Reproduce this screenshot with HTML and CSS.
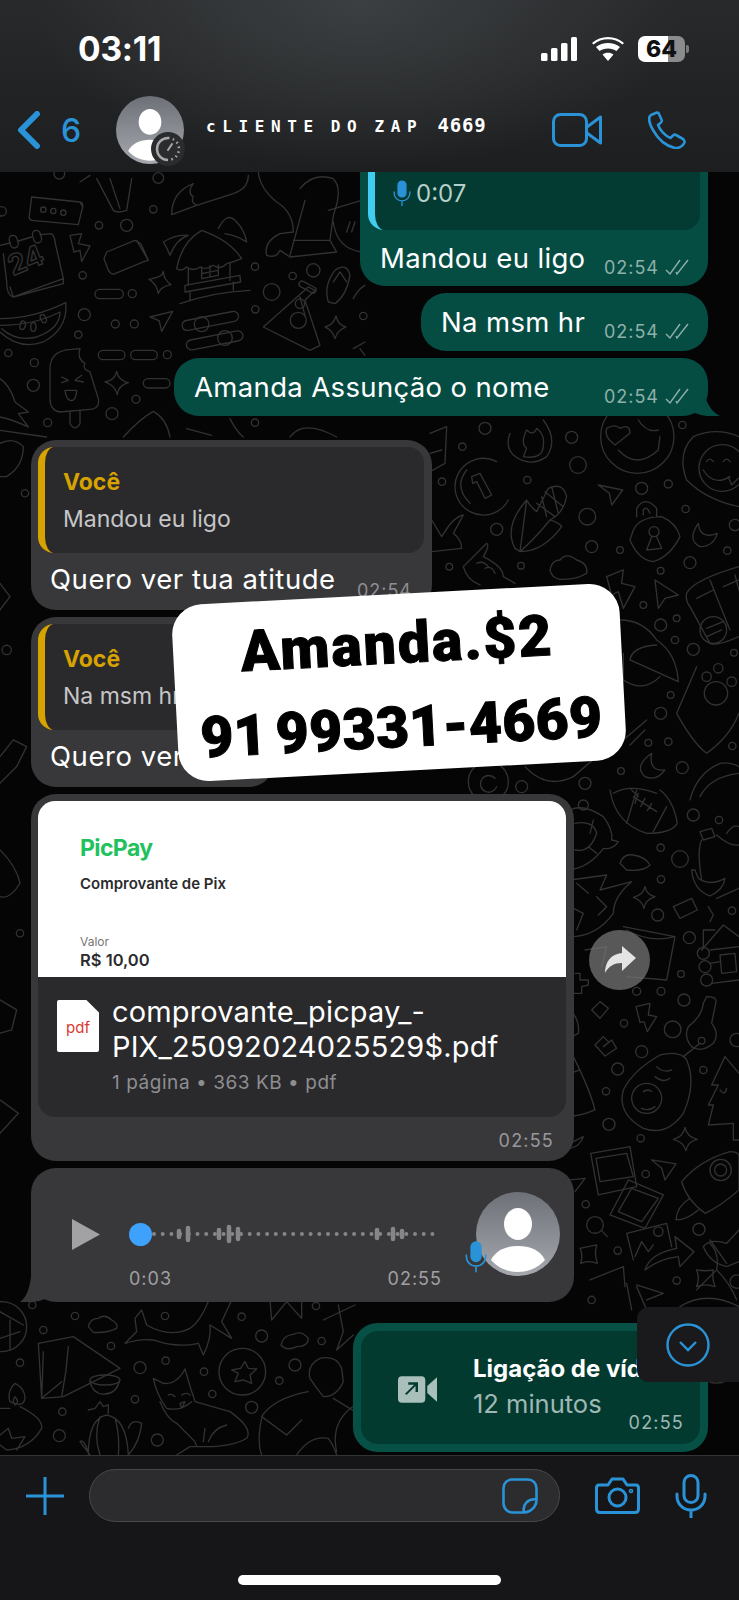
FILE: index.html
```html
<!DOCTYPE html>
<html lang="pt-BR">
<head>
<meta charset="utf-8">
<title>cLIENTE DO ZAP 4669</title>
<link rel="stylesheet" href="styles.css">
</head>
<body>
<svg class="defs" width="0" height="0">
  <defs>
    <linearGradient id="avatarFill" x1="0" y1="0" x2="0" y2="1">
      <stop offset="0" stop-color="#6d7077"/>
      <stop offset="1" stop-color="#a5a8ae"/>
    </linearGradient>
    <clipPath id="avatarClip"><circle cx="42" cy="42" r="42"/></clipPath>
    <symbol id="person" viewBox="0 0 84 84">
      <circle cx="42" cy="42" r="42" fill="url(#avatarFill)"/>
      <g clip-path="url(#avatarClip)" fill="#fff">
        <ellipse cx="42" cy="32" rx="14" ry="16"/>
        <path d="M15 68C20 58 30 54 42 54S64 58 69 68C62 76 52 80 42 80S22 76 15 68Z"/>
      </g>
    </symbol>
    <symbol id="mic" viewBox="0 0 32 44">
      <rect x="9" y="1" width="14" height="28" rx="7"/>
      <path d="M2 20V22C2 30 8 36 16 36S30 30 30 22V20M16 36V44" fill="none" stroke-linecap="round"/>
    </symbol>
  </defs>
</svg>

<main class="phone">
  <header class="topbar">
    <div class="status">
      <span class="clock">03:11</span>
      <div class="status-icons">
        <svg class="signal" viewBox="0 0 36 24"><rect x="0" y="16" width="6.5" height="8" rx="1.5"/><rect x="10" y="11" width="6.5" height="13" rx="1.5"/><rect x="20" y="6" width="6.5" height="18" rx="1.5"/><rect x="30" y="0" width="6" height="24" rx="1.5"/></svg>
        <svg class="wifi" viewBox="0 0 32 24"><path d="M16 24 10.500 17.500C13.500 15 18.500 15 21.500 17.500ZM7.500 14 4 10C10.500 4.500 21.500 4.500 28 10L24.500 14C20 10.500 12 10.500 7.500 14ZM1.500 7.500 0 6C8.500 -2 23.500 -2 32 6L30.500 7.500C22.500 0.500 9.500 0.500 1.500 7.500Z"/></svg>
        <div class="battery"><span>64</span></div>
        <i class="battery-tip"></i>
      </div>
    </div>
    <nav class="navrow">
      <svg class="back" viewBox="0 0 24 38"><path d="M20 3 4 19 20 35"/></svg>
      <span class="unread">6</span>
      <div class="avatar">
        <svg class="avatar-img"><use href="#person"/></svg>
        <svg class="ring" viewBox="0 0 34 34"><circle cx="17" cy="17" r="17" fill="#2b2c2e"/><path d="M17 6A11 11 0 0 0 17 28" fill="none" stroke="#a9a9ab" stroke-width="2.500"/><path d="M17 6A11 11 0 0 1 17 28" fill="none" stroke="#a9a9ab" stroke-width="2.500" stroke-dasharray="1.500 3.400"/><path d="M17 18 21 12" stroke="#a9a9ab" stroke-width="2" stroke-linecap="round"/></svg>
      </div>
      <h1 class="contact">cLIENTE DO ZAP <b>4669</b></h1>
      <svg class="nav-video" viewBox="0 0 50 34"><rect x="1.500" y="1.500" width="33" height="31" rx="7"/><path d="M35 14 48.500 4V30L35 20"/></svg>
      <svg class="nav-phone" viewBox="0 0 38 38"><path d="M9 1.500 3 4C0 6 1 12 5 19 10 28 18 35 27 37 31 37.500 35 35 36.500 31.500 37 30 36 29 35 28L28 24C27 23.500 26 23.500 25 24.500L22.500 27C17 25 12 19 10 14L13 11.500C14 10.500 14 9.500 13.500 8.500L10.500 2C10 1.500 9.500 1.500 9 1.500Z"/></svg>
    </nav>
  </header>

  <section class="chat">
    <svg class="wallpaper" viewBox="0 172 739 1283">
      <g class="doodles" transform="translate(0 172) scale(.3333)">
        <path d="M95 75 240 90Q250 92 248 105L235 158 95 145Q85 140 88 130ZM240 90 248 105"/>
        <path d="M240 30 270 10M290 20 340 115Q350 125 380 115L395 20M330 20 360 110"/>
        <path d="M515 128Q515 60 580 35 560 60 580 75 570 90 590 100L700 65Q745 50 745 10M515 128 590 100"/>
        <path d="M775 0Q780 50 830 90 880 120 880 180L840 185Q790 210 800 250 830 260 840 235L870 255 1010 240 990 205H880M915 85 870 250M900 50Q940 0 1000 20 1030 50 1000 130L990 205"/>
        <path d="M985 115 1085 85M1000 150Q1010 230 1085 240M1040 180 1050 150M1055 180 1065 150"/>
        <path d="M0 220 30 213M55 207 95 195M120 188 155 185Q165 195 165 210L190 320 40 375Q20 370 20 330L10 245M30 345 40 375 190 335 190 320"/>
        <rect x="28" y="190" width="24" height="38" rx="12" transform="rotate(-15 40 205)"/>
        <rect x="98" y="175" width="24" height="38" rx="12" transform="rotate(-15 110 190)"/>
        <text class="doodle-text" transform="translate(38 312) rotate(-22)">24</text>
        <path d="M210 190 245 185 235 215 270 222 245 268 240 235 222 240Z"/>
        <path d="M320 240 405 205Q420 210 425 220L445 265 430 270 345 305Q335 310 325 295L312 260ZM410 205 445 265"/>
        <path d="M450 435 518 418 485 478 478 447Z"/>
        <path d="M447 322Q490 315 490 298 492 325 513 338 480 345 475 365 470 335 447 322Z"/>
        <path d="M530 290Q545 210 605 175 690 205 725 260 700 270 680 275 660 295 640 280 620 295 600 285 580 300 560 285 545 300 530 290ZM565 290V340M690 275V325M605 285V320L655 310V278M630 280V315M605 305 655 295M555 340 720 310 722 330 555 360ZM570 360V385M700 330V355M490 210Q530 185 565 190 530 200 510 250 500 225 490 210ZM655 170Q680 120 705 145 735 175 740 210 710 190 675 185M540 395Q640 360 750 355"/>
        <path d="M0 440Q100 440 197 392 205 470 130 510 60 535 0 480M0 460Q100 460 180 420 180 470 110 495 50 510 5 470"/>
        <ellipse cx="68" cy="460" rx="8" ry="13" transform="rotate(15 68 460)"/><ellipse cx="100" cy="465" rx="8" ry="13"/><ellipse cx="130" cy="440" rx="8" ry="13" transform="rotate(-25 130 440)"/>
        <rect x="545" y="432" width="172" height="30" rx="15" transform="rotate(-11 630 447)"/><circle cx="605" cy="457" r="22"/>
        <rect x="558" y="490" width="172" height="30" rx="15" transform="rotate(-11 645 505)"/><circle cx="675" cy="498" r="22"/>
        <rect x="285" y="352" width="85" height="28" rx="14"/><rect x="295" y="535" width="80" height="28" rx="14"/><rect x="392" y="535" width="80" height="28" rx="14"/><rect x="430" y="620" width="80" height="28" rx="14"/>
        <path d="M150 680V590Q150 535 215 532L240 530Q230 560 255 575 245 590 270 600L295 680Q300 710 270 712L180 720Q150 715 150 680ZM210 720V755Q225 780 240 755V718M185 615 205 625 185 632M245 610 225 625 250 630M195 655H230Q228 690 210 685 198 680 195 655Z"/>
        <path d="M315 630Q345 625 350 598 355 625 385 632 355 640 352 668 345 640 315 630Z"/>
        <path d="M0 620Q30 640 45 690L85 720 55 725 85 765Q30 740 0 735M370 795Q420 740 460 718 500 740 510 795M690 740Q710 780 730 795M0 775 140 795M1010 795Q910 740 870 795M560 770 635 790"/>
        <path d="M985 390Q970 340 1005 295 1040 270 1050 310 1040 370 1005 395ZM1000 330 1020 300 1040 330"/>
        <path d="M790 465 925 345 945 355 915 385 960 520 930 535ZM900 375 915 430"/><rect x="895" y="335" width="55" height="18" rx="8" transform="rotate(28 920 345)"/>
        <circle cx="900" cy="395" r="14"/><circle cx="895" cy="445" r="24"/>
        <path d="M975 465Q1000 460 1008 432 1015 460 1038 465 1012 475 1005 500 998 475 975 465Z"/>
        <path d="M1060 380Q1075 350 1095 340M1060 530 1095 510M1095 550 1080 530"/>
        <circle cx="297" cy="160" r="11"/><circle cx="380" cy="160" r="18"/><circle cx="460" cy="112" r="11"/><circle cx="475" cy="18" r="16"/><circle cx="178" cy="5" r="16"/>
        <circle cx="130" cy="113" r="8"/><circle cx="160" cy="117" r="8"/><circle cx="190" cy="122" r="8"/><circle cx="397" cy="365" r="12"/><circle cx="248" cy="310" r="11"/><circle cx="253" cy="428" r="18"/><circle cx="235" cy="488" r="11"/><circle cx="346" cy="456" r="12"/><circle cx="403" cy="456" r="12"/>
        <circle cx="502" cy="548" r="12"/><circle cx="25" cy="543" r="11"/><circle cx="103" cy="572" r="12"/><circle cx="100" cy="640" r="18"/><circle cx="408" cy="682" r="12"/><circle cx="336" cy="725" r="18"/><circle cx="143" cy="752" r="12"/><circle cx="5" cy="118" r="14"/>
        <circle cx="765" cy="284" r="11"/><circle cx="815" cy="360" r="25"/><circle cx="766" cy="412" r="11"/><circle cx="878" cy="312" r="11"/><circle cx="940" cy="295" r="20"/><circle cx="765" cy="752" r="11"/><circle cx="1090" cy="432" r="11"/>
      </g>

      <g class="doodles" transform="translate(430 420) scale(.3333)">
        <path d="M240 40Q225 80 250 105 300 145 350 110 385 60 340 0M290 30Q270 70 290 85L280 110Q340 120 340 75 345 45 320 25 310 50 290 30Z"/>
        <circle cx="622" cy="50" r="110"/>
        <path d="M555 75Q520 50 530 25 555 10 570 25 600 10 600 40ZM565 90Q620 150 685 90L690 50M625 0Q650 40 685 30"/>
        <path d="M200 125A85 85 0 1 0 235 240M120 250Q70 200 110 150M125 170 150 160 185 225 165 235 140 185 128 190Z"/>
        <path d="M505 195 578 210 545 255 538 220Z"/>
        <path d="M255 385Q220 320 290 240 300 260 320 275L355 205Q400 185 410 230 400 280 360 300 390 310 395 320 340 395 270 395ZM320 250 375 290M345 215 400 260M335 230 350 290M365 200 385 280M290 240Q280 320 270 395M270 395Q320 350 360 300"/>
        <path d="M620 290V265Q645 225 680 265V290M640 285V270Q650 255 660 280M610 330Q630 290 695 290 740 310 750 350 720 410 670 425 625 420 600 360ZM665 350 650 390 695 385 680 350"/><circle cx="672" cy="335" r="15"/>
        <path d="M805 310Q770 360 810 380 850 380 862 340 810 360 805 310Z"/>
        <path d="M790 50Q860 20 927 50M927 260Q830 240 770 180 740 100 790 50M830 125Q840 110 850 125M880 125Q890 110 900 125M820 150Q850 200 900 170M895 170 905 195 925 175"/><path d="M927 95A70 70 0 1 0 925 195"/>
        <path d="M35 350Q70 290 100 285L70 340Q95 360 95 385L5 395M5 300 35 350"/>
        <path d="M100 440 170 370Q180 375 160 410 220 440 220 470L255 490M140 430Q160 420 175 440M165 445Q185 435 195 460M100 440Q110 480 150 495"/>
        <path d="M360 450Q365 420 390 420 410 395 440 420 475 430 470 460 440 480 390 478 365 475 360 450Z"/>
        <path d="M530 470 580 450 575 490 615 500 580 565 565 515 545 525Z"/>
        <path d="M675 480 745 525 705 535 685 565Z"/>
        <path d="M770 520Q790 480 927 440M927 650Q860 680 840 670L780 560Q765 540 770 520M840 480 900 630M800 535 850 510M927 480 880 500M830 625 880 605M830 650 875 630M915 465 927 510"/><circle cx="850" cy="630" r="40"/>
        <path d="M570 600Q640 600 680 660 740 700 745 785L600 720Q605 680 680 675M580 700V780Q640 820 690 770"/>
        <path d="M800 740Q740 880 740 880 790 970 830 1000 900 950 927 880"/><circle cx="858" cy="820" r="35"/><circle cx="830" cy="770" r="14"/><circle cx="865" cy="745" r="14"/><circle cx="905" cy="785" r="14"/>
        <path d="M580 960 650 900M600 975 645 930"/>
        <path d="M665 1000Q610 1040 645 1070 680 1085 705 1050 655 1055 665 1000Z"/>
        <path d="M780 1140Q800 1060 870 1030 900 1025 927 1040M810 1130Q840 1070 927 1060"/>
        <circle cx="175" cy="1085" r="60"/>
        <path d="M195 1075A25 25 0 1 0 200 1100M285 1040Q350 1110 430 1070L500 1010M550 1120Q600 1090 680 1120M600 1105 625 1130"/>
        <path d="M0 40 50 20 45 130 0 155M0 100 35 90"/>
        <circle cx="165" cy="25" r="18"/><circle cx="97" cy="80" r="11"/><circle cx="425" cy="52" r="18"/><circle cx="444" cy="135" r="25"/><circle cx="292" cy="180" r="11"/><circle cx="36" cy="185" r="11"/><circle cx="635" cy="205" r="18"/><circle cx="715" cy="192" r="12"/><circle cx="472" cy="290" r="25"/><circle cx="200" cy="328" r="18"/><circle cx="485" cy="380" r="18"/><circle cx="273" cy="437" r="10"/><circle cx="58" cy="440" r="10"/><circle cx="767" cy="267" r="11"/><circle cx="915" cy="315" r="17"/><circle cx="570" cy="390" r="10"/><circle cx="780" cy="428" r="18"/><circle cx="892" cy="392" r="11"/><circle cx="692" cy="452" r="10"/><circle cx="757" cy="15" r="11"/>
        <circle cx="692" cy="615" r="18"/><circle cx="740" cy="595" r="10"/><circle cx="640" cy="555" r="10"/><circle cx="735" cy="660" r="11"/><circle cx="790" cy="688" r="18"/><circle cx="912" cy="698" r="10"/><circle cx="722" cy="825" r="10"/><circle cx="692" cy="880" r="18"/><circle cx="655" cy="968" r="10"/><circle cx="715" cy="965" r="11"/><circle cx="757" cy="1043" r="18"/><circle cx="573" cy="1053" r="10"/><circle cx="907" cy="978" r="11"/><circle cx="465" cy="1090" r="18"/><circle cx="275" cy="1100" r="18"/>
      </g>

      <g class="doodles" transform="translate(570 790) scale(.3333)">
        <path d="M120 0Q135 100 230 130 305 130 322 100 310 30 270 0M190 20 260 65M205 10 195 40M225 25 212 50M245 40 232 62M250 125 290 50M170 100 200 0"/>
        <path d="M0 60Q40 40 100 80 130 120 125 150L145 155Q130 180 100 175 60 230 0 240M15 100Q70 90 80 130 60 190 15 180M55 170 80 190M70 90 60 130"/><circle cx="40" cy="45" r="15"/>
        <path d="M150 220Q160 190 190 195 225 200 240 225 220 245 170 240Z"/>
        <path d="M0 270 110 255 90 300 185 275Q130 320 130 370 80 440 0 440M0 350 40 370 20 420M80 320 110 350 85 375M20 280 55 310"/>
        <path d="M190 322Q220 315 225 290 230 315 255 320 225 330 222 355 215 330 190 322Z"/>
        <path d="M310 350 365 325 382 360 330 385Z"/>
        <path d="M160 410 315 440 290 570 170 560M170 420Q240 460 315 440M45 480 110 470 95 530"/>
        <path d="M390 125 425 115 435 140 400 150ZM395 150Q380 180 395 270M440 135Q480 170 507 165M470 130Q490 100 507 110M365 240Q370 300 420 318 460 300 465 265 420 290 385 265L375 240ZM507 295 440 325"/>
        <path d="M395 480 460 405 507 440M400 420V470M400 420H435M420 480 507 470M420 520 450 515M425 580 507 570M450 495 495 490 500 545 455 550ZM415 350 430 375 420 395"/><circle cx="400" cy="490" r="18"/><circle cx="405" cy="530" r="18"/><circle cx="410" cy="570" r="18"/>
        <path d="M15 550H30V570H55V585L35 590V610H10"/>
        <path d="M65 660 90 635 115 655 90 685Z"/>
        <path d="M198 650 240 640 235 675 260 680 232 725 222 695 210 697Z"/>
        <path d="M100 770 125 750 140 775 105 798 75 765 100 740 115 755"/>
        <path d="M355 710Q395 680 400 640L410 620Q440 620 438 635L425 700Q450 730 430 760 395 790 365 770 340 740 355 710ZM340 800 390 760"/><circle cx="395" cy="752" r="10"/>
        <path d="M270 795Q330 780 350 810 380 880 340 970 290 1040 220 1015 140 970 160 900 190 840 270 795ZM260 830Q280 850 305 840M255 860Q280 880 300 865M220 905Q235 895 245 905M215 955Q235 965 255 950"/><circle cx="230" cy="925" r="45"/>
        <path d="M465 800 507 850M465 800 425 885H445L415 945H430L415 1005 490 1000V1050H507M450 900Q465 920 470 895"/>
        <path d="M0 660Q30 690 25 730 0 740 0 760M10 800Q60 900 75 960 40 975 0 980M0 850 30 840M0 1060 40 1040Q30 1070 0 1075M0 1170 45 1165 15 1205"/>
        <path d="M310 1048Q340 1040 345 1012 350 1040 382 1048 352 1055 348 1082 340 1055 310 1048Z"/>
        <path d="M62 1090 180 1070 200 1190 85 1215ZM78 1105 170 1090 190 1160 90 1175Z"/>
        <path d="M120 1275 175 1170 280 1215 225 1315ZM145 1265 185 1195 265 1225 215 1295Z"/>
        <path d="M245 1110 318 1122 285 1170 275 1135Z"/>
        <path d="M335 1175Q390 1110 480 1085 507 1085 507 1100V1200Q450 1250 405 1270 350 1230 335 1175ZM360 1225Q320 1250 318 1290 350 1290 385 1260"/><circle cx="452" cy="1140" r="32"/><circle cx="452" cy="1140" r="18"/>
        <circle cx="75" cy="1305" r="25"/><path d="M95 1322 112 1340"/>
        <path d="M30 1375Q55 1370 80 1365 72 1390 82 1420 55 1410 32 1420 40 1395 30 1375Z"/>
        <path d="M190 1410 170 1330 290 1300 305 1370M195 1400 215 1355 235 1385 250 1365"/><circle cx="265" cy="1325" r="14"/>
        <path d="M225 1440Q240 1390 320 1375L315 1340 372 1385 330 1430 325 1400Q270 1405 225 1440Z"/>
        <path d="M380 1440Q405 1445 430 1440 425 1465 435 1490 405 1480 380 1490 390 1465 380 1440Z"/>
        <path d="M60 1470 160 1430 165 1490M170 1480 185 1560M200 1485 280 1510 230 1530M200 1490 230 1560"/>
        <path d="M400 1370Q420 1345 470 1360L507 1320M400 1370Q420 1420 470 1430L507 1415M420 1350 470 1420M330 1550Q410 1500 507 1550"/>
        <circle cx="272" cy="173" r="11"/><circle cx="330" cy="207" r="25"/><circle cx="370" cy="75" r="18"/><circle cx="447" cy="90" r="11"/><circle cx="273" cy="268" r="11"/><circle cx="263" cy="375" r="18"/><circle cx="358" cy="443" r="18"/><circle cx="486" cy="362" r="11"/><circle cx="333" cy="552" r="10"/><circle cx="273" cy="604" r="12"/><circle cx="200" cy="604" r="12"/><circle cx="342" cy="630" r="18"/><circle cx="308" cy="718" r="25"/><circle cx="162" cy="700" r="11"/><circle cx="215" cy="785" r="18"/><circle cx="143" cy="837" r="18"/><circle cx="108" cy="904" r="11"/><circle cx="400" cy="840" r="11"/><circle cx="117" cy="1003" r="18"/><circle cx="212" cy="1045" r="11"/><circle cx="227" cy="1152" r="11"/><circle cx="47" cy="1243" r="11"/><circle cx="143" cy="1382" r="11"/><circle cx="387" cy="1318" r="18"/><circle cx="320" cy="1472" r="11"/><circle cx="65" cy="1530" r="11"/><circle cx="500" cy="750" r="20"/><circle cx="500" cy="1475" r="20"/>
      </g>

      <g class="doodles" transform="translate(0 1295) scale(.3333)">
        <circle cx="5" cy="95" r="75"/><path d="M0 50 70 90M0 130 60 110M30 75V165"/>
        <path d="M265 95Q270 70 295 70 315 55 335 75 355 85 350 100 320 115 280 112ZM843 150Q850 120 880 118 905 105 925 130 925 155 890 155 860 170 843 150Z"/>
        <path d="M375 145 410 110 405 70 425 45 440 90Q510 130 570 100 600 80 625 20M375 145Q420 130 460 135 530 160 595 145L610 180Q635 130 630 90L695 130 665 80 695 15"/>
        <path d="M810 15 815 75 860 20 905 70V15M970 75 1065 30M1015 30 1030 110 1010 165 1060 120"/>
        <path d="M115 145 220 125 360 220 190 305 125 310ZM205 155Q200 230 185 305M130 170 125 310 185 260"/><ellipse cx="315" cy="255" rx="45" ry="15"/><path d="M270 260Q280 300 315 297 350 295 358 258"/>
        <circle cx="727" cy="230" r="70"/><path d="M735 200 745 220 770 222 750 240 755 265 730 255 705 260 715 235 695 225 722 220Z"/>
        <path d="M460 250 490 265Q530 270 555 222L575 290Q580 300 585 320L690 350Q760 400 740 430 710 450 640 455H570L530 480M480 320Q500 370 530 385L585 440 590 455M460 250Q470 300 500 340 540 350 575 320M505 300Q515 295 525 305M545 300Q560 290 570 300M540 325 555 320 545 340ZM610 440 615 400M625 440Q640 400 680 390"/>
        <path d="M930 250Q920 210 960 190 1010 180 1025 220L1030 260Q1010 305 970 305 950 280 930 250ZM925 290Q820 310 785 365L860 420 905 375M785 370Q770 440 785 480M1000 310 1065 350M1065 330Q990 380 1010 470M890 480Q930 420 985 430 1000 450 1010 480"/>
        <path d="M265 480Q265 370 320 360 380 370 385 480M300 365Q280 420 300 480M345 370Q360 420 355 480M265 345 285 340 300 320 310 335 325 330 325 355M385 400Q395 370 425 385 420 440 385 480M265 470Q250 430 240 440L270 480"/>
        <path d="M45 265Q20 290 30 320 70 340 75 310 75 280 45 265ZM45 305Q35 320 45 330 60 320 45 305ZM0 340H30M60 335Q130 370 125 400 90 460 20 465L0 450M0 420 25 400 35 430 75 425 50 465"/>
        <circle cx="97" cy="30" r="11"/><circle cx="225" cy="63" r="11"/><circle cx="130" cy="105" r="11"/><circle cx="333" cy="153" r="11"/><circle cx="60" cy="203" r="11"/><circle cx="495" cy="63" r="11"/><circle cx="725" cy="65" r="11"/><circle cx="785" cy="123" r="18"/><circle cx="948" cy="33" r="11"/><circle cx="965" cy="138" r="11"/><circle cx="885" cy="210" r="18"/><circle cx="838" cy="257" r="11"/><circle cx="420" cy="218" r="18"/><circle cx="497" cy="197" r="11"/><circle cx="612" cy="230" r="11"/><circle cx="637" cy="297" r="11"/><circle cx="755" cy="337" r="18"/><circle cx="405" cy="313" r="11"/><circle cx="187" cy="350" r="11"/><circle cx="178" cy="422" r="18"/><circle cx="472" cy="435" r="18"/>
      </g>

      <g class="doodles" transform="scale(.3333)">
        <path d="M0 1330Q40 1310 70 1340 70 1400 20 1430H0M0 1750 30 1790 0 1830M0 2270 40 2220 80 2240 50 2300 0 2350M0 2550Q50 2600 60 2650 30 2700 0 2690M0 3000 50 3030 35 3090 0 3100M0 3300 55 3340 0 3400"/>
        <circle cx="75" cy="1480" r="11"/><circle cx="20" cy="1950" r="14"/><circle cx="60" cy="2800" r="11"/>
        <path d="M2130 3730Q2160 3760 2150 3810 2190 3850 2210 3900M2150 3810 2090 3870"/>
        <circle cx="2150" cy="4090" r="60"/><circle cx="2150" cy="4090" r="30"/>
      </g>
    </svg>

    <div class="thread">
      <div class="row row-out">
        <article class="bubble bubble-out bubble-quoted">
          <div class="quote quote-out">
            <svg class="quote-mic"><use href="#mic"/></svg>
            <span>0:07</span>
          </div>
          <div class="line">
            <span class="text">Mandou eu ligo</span>
            <span class="meta">02:54<svg class="ticks" viewBox="0 0 26 18"><path d="M2 12 6 16 16 2M12 14 13 16 24 2"/></svg></span>
          </div>
        </article>
      </div>
      <div class="row row-out">
        <article class="bubble bubble-out bubble-short">
          <div class="line">
            <span class="text">Na msm hr</span>
            <span class="meta">02:54<svg class="ticks" viewBox="0 0 26 18"><path d="M2 12 6 16 16 2M12 14 13 16 24 2"/></svg></span>
          </div>
        </article>
      </div>
      <div class="row row-out">
        <article class="bubble bubble-out bubble-wide bubble-tail">
          <div class="line">
            <span class="text">Amanda Assunção o nome</span>
            <span class="meta">02:54<svg class="ticks" viewBox="0 0 26 18"><path d="M2 12 6 16 16 2M12 14 13 16 24 2"/></svg></span>
          </div>
        </article>
      </div>

      <div class="row row-in group-first">
        <article class="bubble bubble-in reply reply-long">
          <div class="quote quote-in">
            <strong>Você</strong>
            <span>Mandou eu ligo</span>
          </div>
          <div class="line">
            <span class="text">Quero ver tua atitude</span>
            <span class="meta meta-in">02:54</span>
          </div>
        </article>
      </div>
      <div class="row row-in">
        <article class="bubble bubble-in reply reply-short">
          <div class="quote quote-in">
            <strong>Você</strong>
            <span>Na msm hr</span>
          </div>
          <div class="line">
            <span class="text">Quero ver</span>
          </div>
        </article>
      </div>

      <div class="row row-in">
        <article class="bubble bubble-in doc">
          <div class="doc-preview">
            <span class="picpay">PicPay</span>
            <span class="doc-title">Comprovante de Pix</span>
            <span class="doc-label">Valor</span>
            <span class="doc-value">R$ 10,00</span>
          </div>
          <div class="doc-file">
            <div class="pdf-icon">pdf</div>
            <div class="doc-info">
              <div class="doc-name">comprovante_picpay_-<br>PIX_25092024025529$.pdf</div>
              <div class="doc-meta">1 página • 363 KB • pdf</div>
            </div>
          </div>
          <div class="doc-time">02:55</div>
        </article>
        <button class="forward" type="button" aria-label="Encaminhar">
          <svg viewBox="0 0 32 28"><path d="M18 0 32 12 18 25V17C10 17 5 20 1 27 1 16 7 8 18 7Z"/></svg>
        </button>
      </div>

      <div class="row row-in">
        <article class="bubble bubble-in audio">
          <svg class="play" viewBox="0 0 28 31"><path d="M0 0 28 15.500 0 31Z"/></svg>
          <div class="audio-track">
            <div class="wave">
              <i class="knob"></i>
              <svg class="wave-bars" viewBox="0 0 285 20">
                <path class="wave-dots" d="M2 10H285"/>
                <path class="wave-tall" d="M27 7V13M36 4V16M67 6V14M77 3V17M86 5V15M225 6V14M241 5V15M250 7V13"/>
              </svg>
            </div>
            <div class="audio-times"><span>0:03</span><span>02:55</span></div>
          </div>
          <div class="audio-avatar">
            <svg class="audio-person"><use href="#person"/></svg>
            <svg class="audio-mic"><use href="#mic"/></svg>
          </div>
        </article>
      </div>

      <div class="row row-out group-last">
        <article class="bubble call">
          <svg class="call-icon" viewBox="0 0 40 27"><path fill-rule="evenodd" d="M4 0H24Q28 0 28 4V23Q28 27 24 27H4Q0 27 0 23V4Q0 0 4 0ZM9 19 18 10V16H20.500V6H10.500V8.500H16.500L7 18Z"/><path d="M30 10 40 1V26L30 17Z"/></svg>
          <div class="call-info">
            <strong>Ligação de vídeo</strong>
            <span>12 minutos</span>
          </div>
          <span class="call-time">02:55</span>
        </article>
      </div>
    </div>

    <aside class="sticker">
      <div class="sticker-name">Amanda.$2</div>
      <div class="sticker-phone">91 99331-4669</div>
    </aside>

    <button class="scroll-down" type="button" aria-label="Ir para o fim">
      <svg viewBox="0 0 44 44"><circle cx="22" cy="22" r="20.500"/><path d="M14 19 22 27 30 19"/></svg>
    </button>
  </section>

  <footer class="composer">
    <div class="composer-row">
      <svg class="plus" viewBox="0 0 38 38"><path d="M19 0V38M0 19H38"/></svg>
      <div class="field">
        <svg class="sticker-icon" viewBox="0 0 36 36"><path d="M22 34.500H11C5.500 34.500 1.500 30.500 1.500 25V10C1.500 5 5.500 1.500 10 1.500H26C31 1.500 34.500 5.500 34.500 10V22C34.500 29 28 34.500 22 34.500ZM22 34.500C20 27 26 20 34.500 21.500"/></svg>
      </div>
      <svg class="camera" viewBox="0 0 45 37"><path d="M4 8H13L17 2H28L32 8H41Q43.500 8 43.500 11V32Q43.500 35.500 40 35.500H5Q1.500 35.500 1.500 32V11Q1.500 8 4 8Z"/><circle cx="22.500" cy="20.500" r="8.500"/><circle cx="36" cy="14" r="0.800"/></svg>
      <svg class="composer-mic" viewBox="0 0 32 44"><rect x="9" y="1.500" width="14" height="27" rx="7"/><path d="M2 20V22C2 30 8 36 16 36S30 30 30 22V20M16 36V44" stroke-linecap="round"/></svg>
    </div>
    <div class="home-bar"></div>
  </footer>
</main>
</body>
</html>
```

FILE: styles.css
```css
* {
  box-sizing: border-box;
}

html, body {
  margin: 0;
  padding: 0;
  background: #050505;
}

body {
  font-family: Inter, "Liberation Sans", sans-serif;
  color: #fff;
}

.defs {
  position: absolute;
}

.phone {
  display: flex;
  flex-direction: column;
  width: 739px;
  height: 1600px;
  overflow: hidden;
}

/* top bar */
.topbar {
  flex: none;
  height: 172px;
  background:
    radial-gradient(ellipse 330px 170px at 360px 0, #3c3f41 0%, rgba(60, 63, 65, 0) 100%),
    linear-gradient(180deg, #27292b 0%, #1c1e1f 100%);
}

.status {
  display: flex;
  align-items: center;
  justify-content: space-between;
  height: 98px;
  padding: 0 50px 0 78px;
}

.clock {
  font-size: 33.500px;
  font-weight: 700;
  letter-spacing: -0.2px;
}

.status-icons {
  display: flex;
  align-items: center;
}

.signal {
  width: 36px;
  height: 24px;
  fill: #fff;
}

.wifi {
  width: 32px;
  height: 24px;
  margin: 0 14px 0 15px;
  fill: #fff;
}

.battery {
  width: 47px;
  height: 26px;
  border-radius: 7px;
  background: linear-gradient(90deg, #fff 0 64%, #8b8b8b 64% 100%);
  color: #111;
  font-size: 23px;
  font-weight: 800;
  line-height: 26px;
  text-align: center;
}

.battery-tip {
  width: 3px;
  height: 8px;
  margin-left: 1px;
  border-radius: 0 2px 2px 0;
  background: #77797b;
}

.navrow {
  display: flex;
  align-items: center;
  height: 70px;
  padding-left: 17px;
  margin-top: -3px;
}

.back {
  width: 24px;
  height: 38px;
  fill: none;
  stroke: #2a93d8;
  stroke-width: 6;
  stroke-linecap: round;
  stroke-linejoin: round;
}

.unread {
  width: 20px;
  margin-left: 20px;
  color: #2a93d8;
  font-size: 32px;
  font-weight: 500;
}

.avatar {
  position: relative;
  width: 68px;
  height: 68px;
  margin-left: 35px;
}

.avatar-img {
  width: 68px;
  height: 68px;
  display: block;
}

.ring {
  position: absolute;
  right: -1px;
  bottom: -2px;
  width: 34px;
  height: 34px;
}

.contact {
  width: 350px;
  margin: -10px 0 0 22px;
  font-family: "DejaVu Sans Mono", monospace;
  font-size: 16px;
  font-weight: 700;
  letter-spacing: 6.6px;
  word-spacing: -5px;
  white-space: nowrap;
}

.contact b {
  margin-left: 3px;
  letter-spacing: 0.8px;
  font-size: 19px;
}

.nav-video {
  position: relative;
  left: -4px;
  width: 50px;
  height: 34px;
  fill: none;
  stroke: #2a93d8;
  stroke-width: 3;
  stroke-linejoin: round;
}

.nav-phone {
  width: 38px;
  height: 38px;
  margin-left: 42px;
  fill: none;
  stroke: #2a93d8;
  stroke-width: 2.6;
  stroke-linejoin: round;
}

/* chat area */
.chat {
  position: relative;
  flex: 1;
  min-height: 0;
  overflow: hidden;
  background: #050505;
}

.wallpaper {
  position: absolute;
  top: 0;
  left: 0;
  width: 739px;
  height: 1283px;
}

.doodles {
  fill: none;
  stroke: #323232;
  stroke-width: 4;
  stroke-linejoin: round;
  stroke-linecap: round;
}

.doodle-text {
  font-family: Inter, sans-serif;
  font-size: 84px;
  font-weight: 700;
  stroke-width: 4;
}

.thread {
  position: relative;
  display: flex;
  flex-direction: column;
  justify-content: flex-end;
  gap: 7px;
  height: 100%;
  padding: 0 31px 3px;
}

.row {
  position: relative;
  display: flex;
  flex: none;
  align-items: center;
}

.row-out {
  justify-content: flex-end;
}

.group-first {
  margin-top: 17px;
}

.group-last {
  margin-top: 14px;
}

.bubble {
  position: relative;
  border-radius: 25px;
}

.bubble-out {
  background: #054d43;
}

.bubble-in {
  background: #38383a;
}

.bubble-short {
  width: 287px;
}

.bubble-wide {
  width: 534px;
}

.line {
  display: flex;
  align-items: center;
  justify-content: space-between;
  height: 58px;
  padding: 0 18px 0 20px;
}

.text {
  font-size: 27.500px;
  letter-spacing: 0.35px;
  white-space: nowrap;
}

.meta {
  display: flex;
  align-items: center;
  margin: 18px 0 0 0;
  color: #8fb0aa;
  font-size: 18px;
  letter-spacing: 1px;
}

.meta-in {
  color: #8e8e92;
}

.ticks {
  width: 26px;
  height: 18px;
  margin-left: 5px;
  fill: none;
  stroke: #8fb0aa;
  stroke-width: 1.4;
}

.bubble-tail::after {
  content: "";
  position: absolute;
  right: -12px;
  bottom: 0;
  width: 30px;
  height: 26px;
  background: #054d43;
  clip-path: path("M0 0H14C16 14 22 22 30 26 20 27 8 26 0 20Z");
}

.bubble-quoted {
  width: 348px;
  padding: 8px 8px 0;
}

.bubble-quoted .line {
  height: 56px;
  padding: 0 10px 0 12px;
}

.quote {
  display: flex;
  overflow: hidden;
  background: #033a31;
}

.quote-out {
  align-items: center;
  height: 110px;
  padding: 36px 0 0 18px;
  border-left: 7px solid #41cdf0;
  border-radius: 8px 0 16px 16px;
  color: #b5cfca;
  font-size: 24px;
}

.quote-mic {
  width: 18px;
  height: 26px;
  margin-right: 5px;
  fill: #2a93d8;
  stroke: #2a93d8;
  stroke-width: 2.4;
}

.quote-in {
  flex-direction: column;
  height: 106px;
  padding: 21px 0 0 18px;
  border-left: 7px solid #d6a300;
  border-radius: 16px;
  background: #2a2a2c;
  color: #c6c6c8;
  font-size: 23px;
}

.quote-in strong {
  margin-bottom: 9px;
  color: #d6a300;
  font-size: 23px;
  font-weight: 700;
}

.reply {
  height: 170px;
  padding: 7px 8px 0 7px;
}

.reply .line {
  height: 52px;
  padding: 0 12px;
}

.reply .text {
  letter-spacing: 0.55px;
}

.reply .meta {
  margin-top: 23px;
}

.reply-long {
  width: 401px;
}

.reply-short {
  width: 243px;
}

/* document */
.doc {
  width: 543px;
  height: 367px;
  padding: 7px 8px 0 7px;
}

.doc-preview {
  display: flex;
  flex-direction: column;
  height: 176px;
  padding: 34px 0 0 42px;
  border-radius: 17px 17px 0 0;
  background: #fff;
  color: #2b2b2d;
}

.picpay {
  color: #21c25e;
  font-size: 23px;
  font-weight: 700;
  letter-spacing: -0.6px;
  line-height: 26px;
}

.doc-title {
  margin-top: 13px;
  font-size: 15px;
  font-weight: 600;
  line-height: 20px;
}

.doc-label {
  margin-top: 41px;
  color: #777;
  font-size: 12px;
  line-height: 14px;
}

.doc-value {
  margin-top: 1px;
  font-size: 16.500px;
  font-weight: 600;
  line-height: 20px;
}

.doc-file {
  display: flex;
  height: 140px;
  padding: 23px 0 0 19px;
  border-radius: 0 0 17px 17px;
  background: #2a2a2c;
}

.pdf-icon {
  width: 42px;
  height: 52px;
  padding-top: 18px;
  border-radius: 2px;
  background: linear-gradient(225deg, #d9d9d9 0 8px, #fff 8px);
  color: #d63b33;
  font-size: 15px;
  line-height: 20px;
  text-align: center;
  clip-path: polygon(0 0, 70% 0, 100% 24%, 100% 100%, 0 100%);
}

.doc-info {
  margin: -6px 0 0 13px;
}

.doc-name {
  font-size: 29px;
  letter-spacing: 0.15px;
  line-height: 35px;
  white-space: nowrap;
}

.doc-meta {
  margin-top: 7px;
  color: #8e8e92;
  font-size: 19px;
  line-height: 24px;
  letter-spacing: 0.55px;
}

.doc-time {
  padding: 13px 12px 0 0;
  color: #98989c;
  font-size: 18px;
  letter-spacing: 1.2px;
  text-align: right;
}

.forward {
  position: absolute;
  left: 558px;
  top: 136px;
  width: 61px;
  height: 60px;
  padding: 0;
  border: 0;
  border-radius: 50%;
  background: rgba(120, 120, 120, 0.72);
}

.forward svg {
  display: block;
  width: 32px;
  height: 28px;
  margin: 0 auto;
  fill: #e4e4e4;
}

/* voice note */
.audio {
  display: flex;
  width: 543px;
  height: 134px;
}

.bubble-in.audio::after {
  content: "";
  position: absolute;
  left: -11px;
  bottom: 0;
  width: 30px;
  height: 26px;
  background: #38383a;
  clip-path: path("M30 0H11C10 12 6 22 0 26 10 27 22 26 30 20Z");
}

.play {
  flex: none;
  width: 28px;
  height: 31px;
  margin: 51px 0 0 41px;
  fill: #a2a2a4;
}

.audio-track {
  width: 313px;
  margin: 54px 0 0 29px;
}

.wave {
  display: flex;
  align-items: center;
  height: 24px;
}

.knob {
  flex: none;
  width: 23px;
  height: 23px;
  border-radius: 50%;
  background: #3ea1fb;
}

.wave-bars {
  width: 285px;
  height: 20px;
}

.wave-dots {
  fill: none;
  stroke: #868688;
  stroke-width: 4;
  stroke-linecap: round;
  stroke-dasharray: 0 8.700;
}

.wave-tall {
  fill: none;
  stroke: #868688;
  stroke-width: 4.500;
  stroke-linecap: round;
}

.audio-times {
  display: flex;
  justify-content: space-between;
  margin-top: 22px;
  color: #a0a0a3;
  font-size: 18px;
  letter-spacing: 1px;
}

.audio-avatar {
  position: relative;
  width: 84px;
  height: 84px;
  margin: 24px 0 0 34px;
}

.audio-person {
  width: 84px;
  height: 84px;
  display: block;
}

.audio-mic {
  position: absolute;
  left: -11px;
  top: 46px;
  width: 22px;
  height: 37px;
  fill: #2a93d8;
  stroke: #2a93d8;
  stroke-width: 2.4;
}

/* call */
.call {
  display: flex;
  align-items: flex-start;
  width: 355px;
  height: 129px;
  overflow: hidden;
  border: 8px solid #075045;
  background: #033a30;
}

.call-icon {
  flex: none;
  width: 39px;
  height: 27px;
  margin: 45px 0 0 37px;
  fill: #a8bfba;
}

.call-info {
  display: flex;
  flex-direction: column;
  margin: 23px 0 0 36px;
  white-space: nowrap;
}

.call-info strong {
  font-size: 24px;
  font-weight: 700;
  line-height: 30px;
}

.call-info span {
  margin-top: 5px;
  color: #9eb8b3;
  font-size: 25.500px;
  line-height: 30px;
}

.call-time {
  position: absolute;
  right: 16px;
  bottom: 11px;
  color: #9eb8b3;
  font-size: 18px;
  letter-spacing: 1.2px;
}

/* overlays */
.sticker {
  position: absolute;
  left: 175px;
  top: 422px;
  display: flex;
  flex-direction: column;
  align-items: center;
  justify-content: center;
  width: 448px;
  height: 177px;
  padding-top: 6px;
  border-radius: 30px;
  background: #fff;
  color: #000;
  font-family: Roboto, sans-serif;
  font-size: 57px;
  font-weight: 900;
  line-height: 84px;
  -webkit-text-stroke: 1px #000;
  transform: rotate(-3deg);
}

.sticker-name {
  letter-spacing: 2px;
}

.sticker-phone {
  letter-spacing: 0.4px;
  word-spacing: -6px;
}

.scroll-down {
  position: absolute;
  right: 0;
  top: 1135px;
  width: 102px;
  height: 75px;
  padding: 0;
  border: 0;
  border-radius: 12px 0 0 12px;
  background: #1a1a1c;
}

.scroll-down svg {
  display: block;
  width: 44px;
  height: 44px;
  margin: 0 auto;
  fill: none;
  stroke: #2a93d8;
  stroke-width: 2.400;
}

/* composer */
.composer {
  flex: none;
  height: 145px;
  border-top: 1px solid #333335;
  background: #161618;
}

.composer-row {
  display: flex;
  align-items: center;
  height: 53px;
  margin-top: 13px;
  padding-left: 26px;
}

.plus {
  flex: none;
  width: 38px;
  height: 38px;
  fill: none;
  stroke: #2a93d8;
  stroke-width: 3;
  stroke-linecap: round;
}

.field {
  display: flex;
  align-items: center;
  justify-content: flex-end;
  width: 471px;
  height: 53px;
  margin-left: 25px;
  padding-right: 21px;
  border: 1px solid #48484a;
  border-radius: 27px;
  background: #2c2c2e;
}

.sticker-icon {
  width: 36px;
  height: 36px;
  fill: none;
  stroke: #2a93d8;
  stroke-width: 2.6;
}

.camera {
  flex: none;
  width: 45px;
  height: 37px;
  margin-left: 35px;
  fill: none;
  stroke: #2a93d8;
  stroke-width: 3;
  stroke-linejoin: round;
}

.composer-mic {
  flex: none;
  width: 32px;
  height: 44px;
  margin-left: 35px;
  fill: none;
  stroke: #2a93d8;
  stroke-width: 3;
}

.home-bar {
  width: 263px;
  height: 10px;
  margin: 53px 0 0 238px;
  border-radius: 5px;
  background: #fff;
}
```
